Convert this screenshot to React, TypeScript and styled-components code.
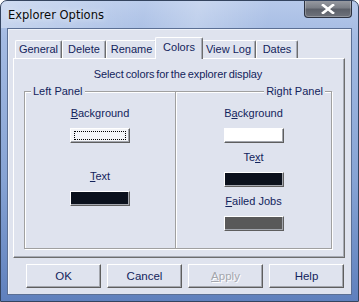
import React from 'react'
import styled, { createGlobalStyle } from 'styled-components'

const GlobalStyle = createGlobalStyle`
  html, body {
    margin: 0;
    padding: 0;
    background: #ffffff;
  }
  body {
    font-family: "Liberation Sans", Arial, sans-serif;
    font-size: 11px;
  }
`

const FACE = '#dfe3ee'
const TEXT = '#13235c'

const Window = styled.div`
  width: 359px;
  height: 302px;
  box-sizing: border-box;
  display: flex;
  flex-direction: column;
  border: 1px solid #34445f;
  border-radius: 7px 7px 0 0;
  background: linear-gradient(180deg, #b6c9ea 0%, #a4bbe3 12%, #86a3d4 60%, #5f80bd 100%);
  padding: 0 6px 6px 6px;
  overflow: hidden;
`

const TitleBar = styled.div`
  height: 27px;
  flex-shrink: 0;
  display: flex;
  align-items: flex-start;
  justify-content: space-between;
  background: linear-gradient(100deg, rgba(255, 255, 255, 0.35) 0%, rgba(255, 255, 255, 0.05) 40%, rgba(255, 255, 255, 0.25) 55%, rgba(255, 255, 255, 0) 75%);
  margin: 0 -6px;
  padding: 0 6px 0 7px;
`

const Title = styled.span`
  font-family: "DejaVu Sans", "Liberation Sans", sans-serif;
  font-size: 11.5px;
  color: #0a0a0a;
  line-height: 28px;
  text-shadow: 0 0 6px rgba(255, 255, 255, 0.9);
`

const CloseButton = styled.div`
  width: 48px;
  height: 18px;
  margin-top: -1px;
  box-sizing: border-box;
  border: 1px solid #2c3240;
  border-top: none;
  border-radius: 0 0 4px 4px;
  background: linear-gradient(180deg, #9a9da4 0%, #7b7f87 45%, #5c6069 55%, #6e727b 100%);
  box-shadow: inset 0 0 0 1px rgba(255, 255, 255, 0.25);
  display: flex;
  align-items: center;
  justify-content: center;
`

const Client = styled.div`
  flex: 1;
  display: flex;
  flex-direction: column;
  background: ${FACE};
  border: 1px solid #5b6f94;
  box-shadow: inset 1px 1px 0 #eef2fa;
  padding: 8px 6px 6px 5px;
`

const TabStrip = styled.div`
  display: flex;
  align-items: flex-end;
  height: 21px;
  padding-left: 2px;
  position: relative;
  z-index: 1;
`

const Tab = styled.div<{ $w: number; $active?: boolean }>`
  width: ${({ $w }) => $w}px;
  box-sizing: border-box;
  height: ${({ $active }) => ($active ? 22 : 18)}px;
  margin: 0 ${({ $active }) => ($active ? -2 : 0)}px ${({ $active }) => ($active ? -1 : 0)}px;
  padding-top: ${({ $active }) => ($active ? 3 : 2)}px;
  text-align: center;
  color: ${TEXT};
  background: ${FACE};
  border-top: 1px solid #ffffff;
  border-left: 1px solid #ffffff;
  border-right: 1px solid #6d6d6d;
  border-radius: 2px 2px 0 0;
  box-shadow: inset -1px 0 0 #a7abb5;
  position: relative;
  z-index: ${({ $active }) => ($active ? 2 : 1)};
`

const TabPanel = styled.div`
  height: 200px;
  box-sizing: border-box;
  display: flex;
  flex-direction: column;
  border-top: 1px solid #ffffff;
  border-left: 1px solid #ffffff;
  border-right: 1px solid #6d6d6d;
  border-bottom: 1px solid #6d6d6d;
  box-shadow: inset -1px -1px 0 #a7abb5;
  padding: 9px 12px 8px 10px;
`

const Caption = styled.div`
  text-align: center;
  color: ${TEXT};
  line-height: 13px;
  margin-bottom: 10px;
  word-spacing: -1px;
  letter-spacing: -0.1px;
`

const Groups = styled.div`
  flex: 1;
  display: grid;
  grid-template-columns: 152px 1fr;
`

const GroupBox = styled.div<{ $noLeft?: boolean; $gap: number }>`
  position: relative;
  border: 1px solid #a0a0a0;
  border-left: ${({ $noLeft }) => ($noLeft ? 'none' : '1px solid #a0a0a0')};
  box-shadow: inset 1px 1px 0 #ffffff, 1px 1px 0 #ffffff;
  display: flex;
  flex-direction: column;
  align-items: center;
  padding-top: 15px;
  gap: ${({ $gap }) => $gap}px;
`

const GroupLabel = styled.span<{ $right?: boolean }>`
  position: absolute;
  top: -7px;
  ${({ $right }) => ($right ? 'right: 6px;' : 'left: 6px;')}
  padding: 0 2px;
  background: ${FACE};
  color: ${TEXT};
  line-height: 13px;
`

const Pair = styled.div`
  display: flex;
  flex-direction: column;
  align-items: center;
  gap: 8px;
`

const FieldLabel = styled.span`
  color: ${TEXT};
  line-height: 13px;
`

const Key = styled.span`
  text-decoration: underline;
`

const Swatch = styled.div<{ $color: string; $focus?: boolean }>`
  width: 60px;
  height: 15px;
  box-sizing: border-box;
  border-top: 1px solid #ffffff;
  border-left: 1px solid #ffffff;
  border-right: 1px solid #5e5e5e;
  border-bottom: 1px solid #5e5e5e;
  background: ${({ $color }) => $color};
  box-shadow: inset -1px -1px 0 #a3a6ad;
  padding: 2px 3px;
  &::after {
    content: '';
    display: ${({ $focus }) => ($focus ? 'block' : 'none')};
    height: 100%;
    box-sizing: border-box;
    border: 1px dotted #000000;
  }
`

const ButtonRow = styled.div`
  display: flex;
  justify-content: flex-end;
  gap: 6px;
  margin-top: 6px;
  padding-right: 1px;
`

const Button = styled.div<{ $disabled?: boolean }>`
  width: 75px;
  height: 24px;
  box-sizing: border-box;
  display: flex;
  align-items: center;
  justify-content: center;
  background: ${FACE};
  border-top: 1px solid #ffffff;
  border-left: 1px solid #ffffff;
  border-right: 1px solid #5e5e5e;
  border-bottom: 1px solid #5e5e5e;
  box-shadow: inset -1px -1px 0 #a3a6ad;
  font-size: 11.5px;
  color: ${({ $disabled }) => ($disabled ? '#a3a6ad' : TEXT)};
  text-shadow: ${({ $disabled }) => ($disabled ? '1px 1px 0 #ffffff' : 'none')};
`

const tabs = [
  { label: 'General', w: 47 },
  { label: 'Delete', w: 44 },
  { label: 'Rename', w: 51 },
  { label: 'Colors', w: 48, active: true },
  { label: 'View Log', w: 55 },
  { label: 'Dates', w: 42 },
]

export default function App() {
  return (
    <>
      <GlobalStyle />
      <Window>
        <TitleBar>
          <Title>Explorer Options</Title>
          <CloseButton>
            <svg width="14" height="10" viewBox="0 0 14 10">
              <path d="M2 1 L12 9 M12 1 L2 9" stroke="#ffffff" strokeWidth="2.6" strokeLinecap="square" />
            </svg>
          </CloseButton>
        </TitleBar>
        <Client>
          <TabStrip>
            {tabs.map((t) => (
              <Tab key={t.label} $w={t.w} $active={t.active}>
                {t.label}
              </Tab>
            ))}
          </TabStrip>
          <TabPanel>
            <Caption>Select colors for the explorer display</Caption>
            <Groups>
              <GroupBox $gap={27}>
                <GroupLabel>Left Panel</GroupLabel>
                <Pair>
                  <FieldLabel>
                    <Key>B</Key>ackground
                  </FieldLabel>
                  <Swatch $color="#f4f5f8" $focus />
                </Pair>
                <Pair>
                  <FieldLabel>
                    <Key>T</Key>ext
                  </FieldLabel>
                  <Swatch $color="#0b111c" />
                </Pair>
              </GroupBox>
              <GroupBox $noLeft $gap={8}>
                <GroupLabel $right>Right Panel</GroupLabel>
                <Pair>
                  <FieldLabel>
                    B<Key>a</Key>ckground
                  </FieldLabel>
                  <Swatch $color="#ffffff" />
                </Pair>
                <Pair>
                  <FieldLabel>
                    Te<Key>x</Key>t
                  </FieldLabel>
                  <Swatch $color="#0b111c" />
                </Pair>
                <Pair>
                  <FieldLabel>
                    <Key>F</Key>ailed Jobs
                  </FieldLabel>
                  <Swatch $color="#595959" />
                </Pair>
              </GroupBox>
            </Groups>
          </TabPanel>
          <ButtonRow>
            <Button>OK</Button>
            <Button>Cancel</Button>
            <Button $disabled>
              <Key>A</Key>pply
            </Button>
            <Button>Help</Button>
          </ButtonRow>
        </Client>
      </Window>
    </>
  )
}
